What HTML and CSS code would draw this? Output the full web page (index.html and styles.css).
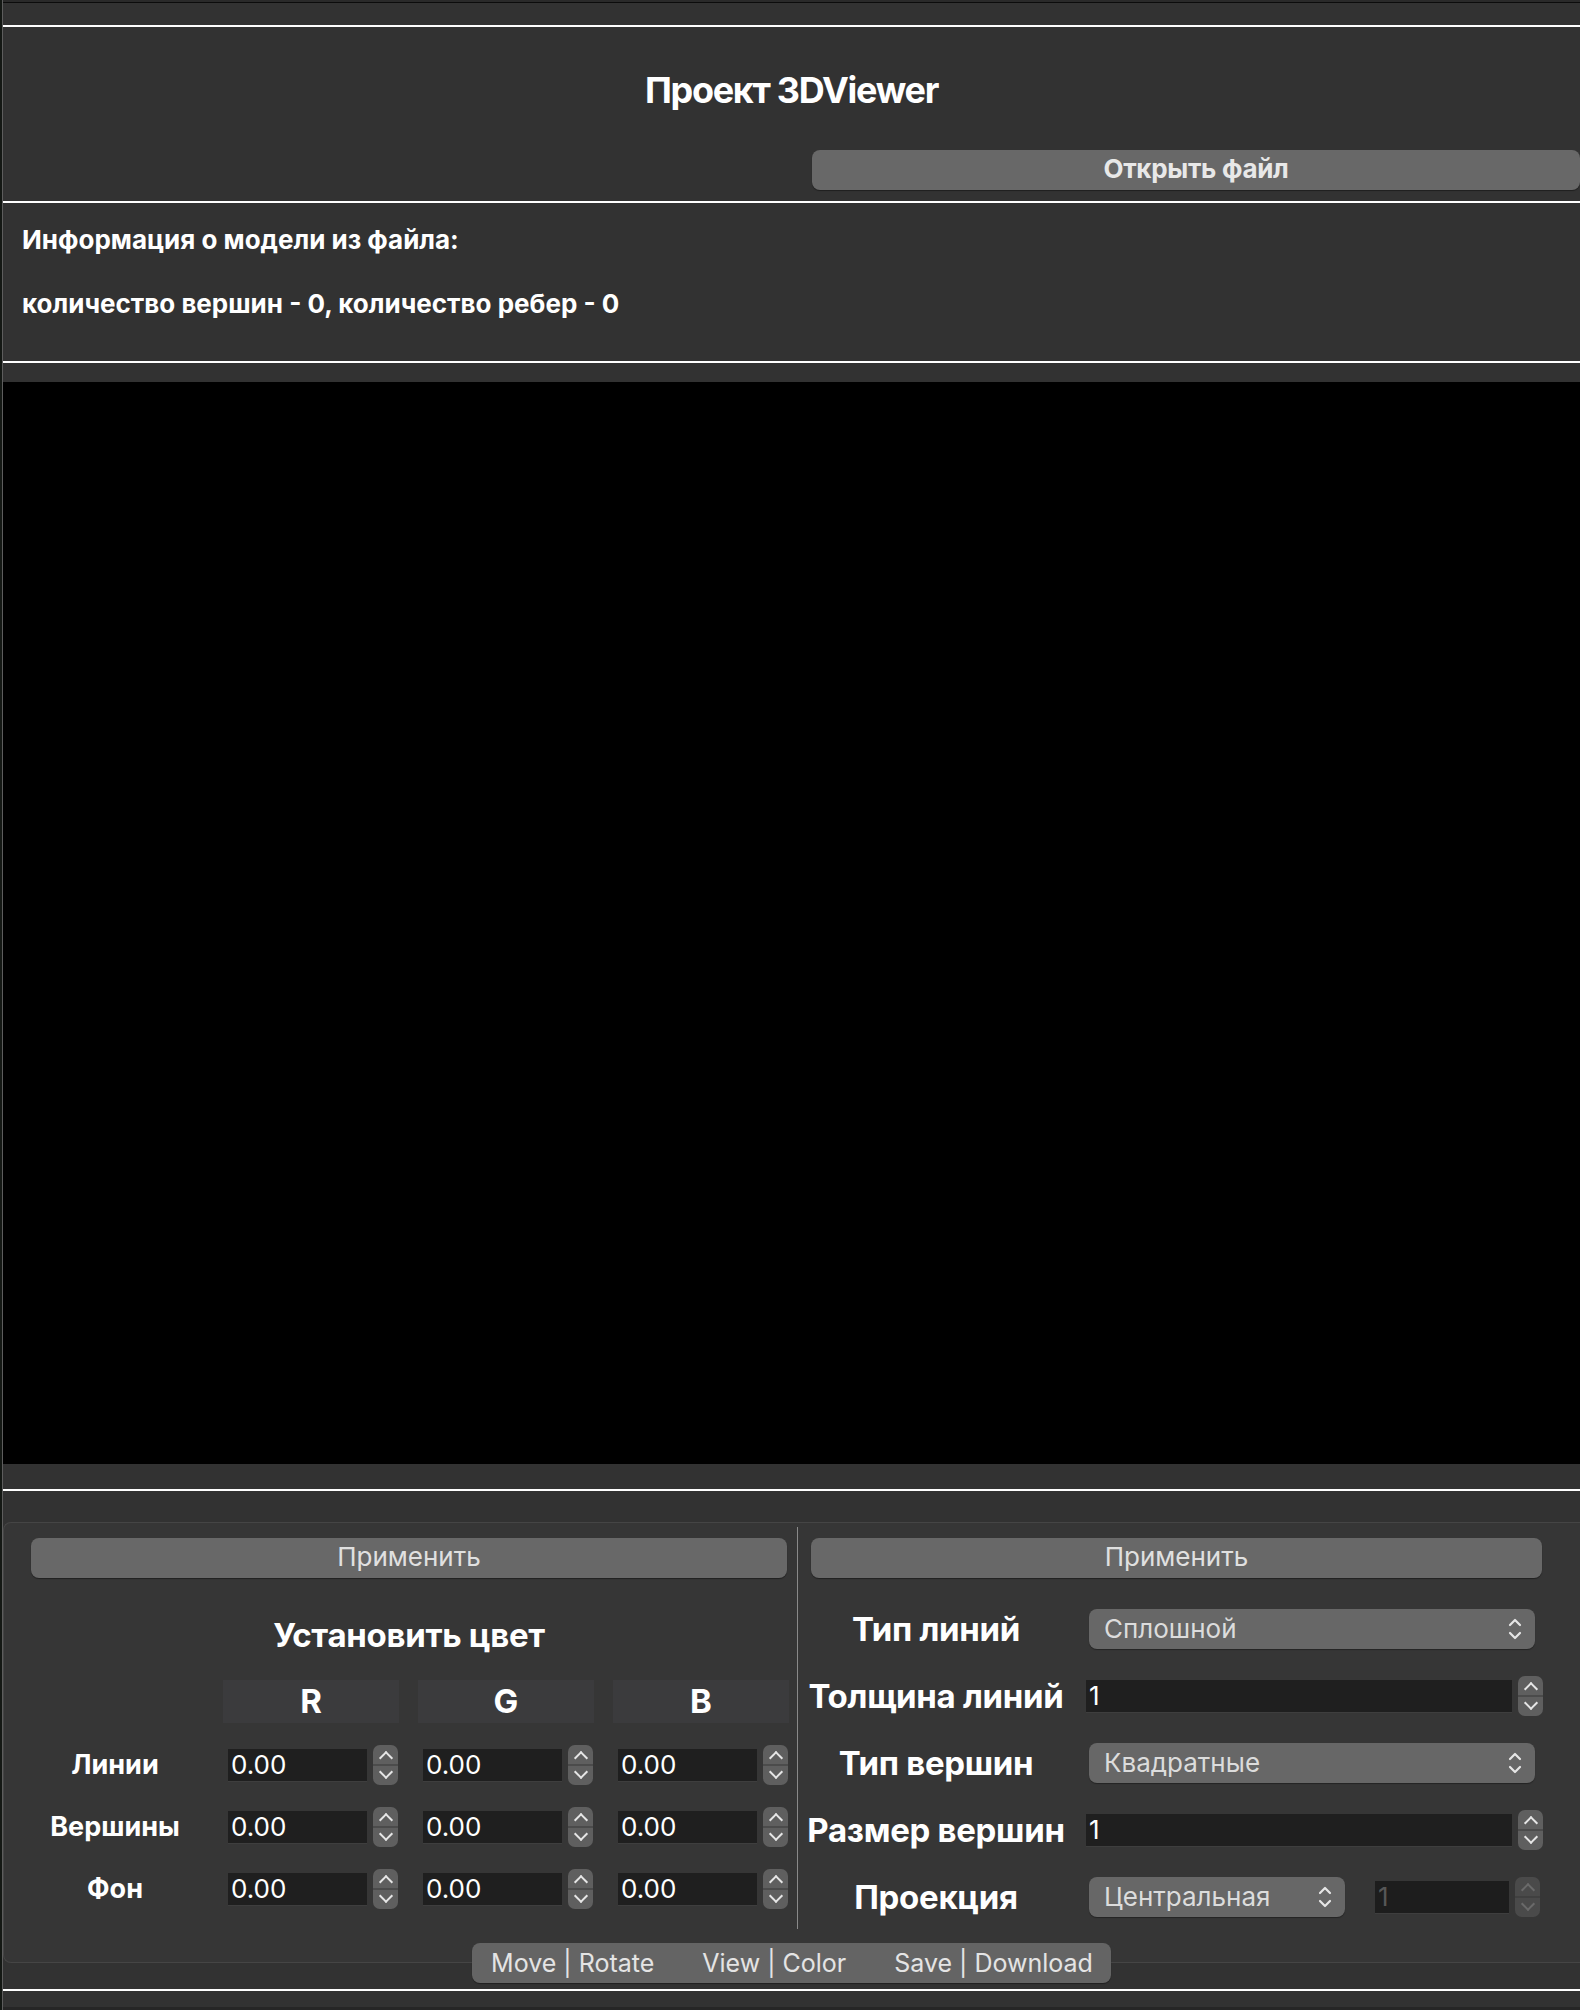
FILE: index.html
```html
<!DOCTYPE html>
<html lang="ru">
<head>
<meta charset="utf-8">
<title>Проект 3DViewer</title>
<link rel="stylesheet" href="styles.css">
</head>
<body>
<div class="window">
  <div class="topline"></div>
  <div class="rule rule-top"></div>
  <header class="head">
    <h1 class="title">Проект 3DViewer</h1>
    <div class="open-row"><button class="btn btn-open">Открыть файл</button></div>
  </header>
  <div class="rule"></div>
  <section class="info">
    <p class="info-line">Информация о модели из файла:</p>
    <p class="info-line">количество вершин - 0, количество ребер - 0</p>
  </section>
  <div class="rule"></div>
  <div class="viewport"></div>
  <div class="rule rule-mid"></div>
  <div class="tabs">
    <div class="panel">
      <div class="pane pane-left">
        <button class="btn btn-apply btn-apply-left">Применить</button>
        <h2 class="color-title">Установить цвет</h2>
        <div class="color-grid">
          <div class="corner"></div>
          <div class="ch">R</div>
          <div class="ch">G</div>
          <div class="ch">B</div>

          <div class="rl">Линии</div>
          <div class="cell"><input class="field" value="0.00"><span class="spin"></span></div>
          <div class="cell"><input class="field" value="0.00"><span class="spin"></span></div>
          <div class="cell"><input class="field" value="0.00"><span class="spin"></span></div>

          <div class="rl">Вершины</div>
          <div class="cell"><input class="field" value="0.00"><span class="spin"></span></div>
          <div class="cell"><input class="field" value="0.00"><span class="spin"></span></div>
          <div class="cell"><input class="field" value="0.00"><span class="spin"></span></div>

          <div class="rl">Фон</div>
          <div class="cell"><input class="field" value="0.00"><span class="spin"></span></div>
          <div class="cell"><input class="field" value="0.00"><span class="spin"></span></div>
          <div class="cell"><input class="field" value="0.00"><span class="spin"></span></div>
        </div>
      </div>
      <div class="sep"></div>
      <div class="pane pane-right">
        <button class="btn btn-apply btn-apply-right">Применить</button>
        <div class="form-grid">
          <div class="fl">Тип линий</div>
          <div class="combo combo-wide"><span>Сплошной</span>
            <svg class="updown" viewBox="0 0 14 24" width="14" height="24"><polyline points="2,8 7,3 12,8"/><polyline points="2,16 7,21 12,16"/></svg>
          </div>

          <div class="fl">Толщина линий</div>
          <div class="spinbox"><input class="field field-wide" value="1"><span class="spin"></span></div>

          <div class="fl">Тип вершин</div>
          <div class="combo combo-wide"><span>Квадратные</span>
            <svg class="updown" viewBox="0 0 14 24" width="14" height="24"><polyline points="2,8 7,3 12,8"/><polyline points="2,16 7,21 12,16"/></svg>
          </div>

          <div class="fl">Размер вершин</div>
          <div class="spinbox"><input class="field field-wide" value="1"><span class="spin"></span></div>

          <div class="fl">Проекция</div>
          <div class="proj-row">
            <div class="combo combo-narrow"><span>Центральная</span>
              <svg class="updown" viewBox="0 0 14 24" width="14" height="24"><polyline points="2,8 7,3 12,8"/><polyline points="2,16 7,21 12,16"/></svg>
            </div>
            <div class="spinbox disabled"><input class="field field-small" value="1" disabled><span class="spin"></span></div>
          </div>
        </div>
      </div>
    </div>
    <nav class="tabbar">
      <span class="tab tab-1">Move | Rotate</span>
      <span class="tab tab-2">View | Color</span>
      <span class="tab tab-3">Save | Download</span>
    </nav>
  </div>
  <div class="rule rule-bottom"></div>
  <div class="bottomline"></div>
</div>
</body>
</html>
```

FILE: styles.css
```css
* { box-sizing: border-box; }
html, body { margin: 0; padding: 0; }
body {
  width: 1580px;
  height: 2010px;
  overflow: hidden;
  background: #141814;
  font-family: Inter, "Noto Sans", "Liberation Sans", sans-serif;
  color: #ffffff;
}
.window {
  margin-left: 2px;
  height: 2010px;
  border-left: 1px solid #5d5d5d;
  background: #323232;
  display: flex;
  flex-direction: column;
}
.topline {
  flex: none;
  height: 3px;
  background: #2a2a2a;
  border-bottom: 1px solid #0c0c0c;
}
.rule { flex: none; height: 2px; background: #ffffff; }
.rule-top { margin-top: 22px; }
.head { flex: none; height: 174px; padding-top: 41px; }
.title {
  margin: 0;
  text-align: center;
  font-size: 36px;
  line-height: 44px;
  font-weight: 700;
  letter-spacing: -1.3px;
}
.open-row { display: flex; justify-content: flex-end; margin-top: 38px; }
.btn {
  font-family: inherit;
  border: none;
  background: #686868;
  color: #e0e0e0;
  border-radius: 8px;
  height: 40px;
  padding: 0 0 3px;
  box-shadow: 0 1px 1px rgba(0, 0, 0, 0.4);
}
.btn-open { width: 768px; font-size: 26px; font-weight: 700; color: #e8e8e8; letter-spacing: -0.3px; }
.info { flex: none; height: 158px; padding: 21px 0 0 19px; }
.info-line {
  margin: 0 0 32px;
  font-size: 26px;
  line-height: 32px;
  font-weight: 700;
}
.viewport { flex: none; margin-top: 19px; height: 1082px; background: #000000; }
.rule-mid { margin-top: 25px; }
.tabs { flex: none; margin-top: 31px; display: flex; flex-direction: column; }
.panel {
  height: 441px;
  border: 1px solid #454545;
  border-right: none;
  border-radius: 8px 0 0 8px;
  background: #363636;
  display: flex;
}
.pane { padding-top: 15px; }
.pane-left { width: 793px; flex: none; }
.btn-apply { display: block; font-size: 26px; }
.btn-apply-left { margin-left: 27px; width: 756px; }
.color-title {
  margin: 37px 0 0 27px;
  width: 756px;
  text-align: center;
  font-size: 33px;
  line-height: 40px;
  font-weight: 700;
  letter-spacing: -0.3px;
}
.color-grid {
  margin-top: 25px;
  display: grid;
  grid-template-columns: 200px 176px 176px 176px;
  grid-template-rows: 43px 40px 40px 40px;
  column-gap: 19px;
  row-gap: 22px;
}
.ch {
  background: #3b3b3d;
  text-align: center;
  font-size: 33px;
  font-weight: 700;
  line-height: 43px;
}
.rl {
  padding-left: 22px;
  text-align: center;
  font-size: 27px;
  font-weight: 700;
  line-height: 40px;
}
.cell { display: flex; align-items: center; gap: 6px; padding-left: 5px; }
.field {
  font-family: inherit;
  height: 33px;
  border: none;
  border-bottom: 1px solid #3e3e3e;
  background: #1f1f1f;
  color: #ffffff;
  font-size: 26px;
  padding: 0 0 0 3px;
  margin: 0;
  outline: none;
}
.cell .field { width: 139px; }
.spin {
  position: relative;
  flex: none;
  width: 25px;
  height: 40px;
  border-radius: 7px;
  background: linear-gradient(#5f5f5f 0, #5f5f5f 19px, #4b4b4b 19px, #4b4b4b 21px, #5f5f5f 21px);
}
.spin::before,
.spin::after {
  content: "";
  position: absolute;
  left: 8px;
  width: 8px;
  height: 8px;
  border-top: 2.5px solid #e6e6e6;
  border-left: 2.5px solid #e6e6e6;
}
.spin::before { top: 8px; transform: rotate(45deg); }
.spin::after { bottom: 8px; transform: rotate(-135deg); }
.sep { flex: none; width: 1px; height: 402px; margin-top: 4px; background: #8a8a8a; }
.pane-right { flex: 1; }
.btn-apply-right { margin-left: 13px; width: 731px; }
.form-grid {
  margin-top: 31px;
  padding-left: 8px;
  display: grid;
  grid-template-columns: 260px auto;
  grid-auto-rows: 40px;
  column-gap: 20px;
  row-gap: 27px;
}
.fl {
  text-align: center;
  font-size: 33px;
  font-weight: 700;
  line-height: 40px;
  letter-spacing: -0.3px;
  white-space: nowrap;
}
.combo {
  height: 40px;
  margin-left: 3px;
  border-radius: 8px;
  background: #676767;
  color: #dcdcdc;
  font-size: 26px;
  line-height: 40px;
  padding-left: 15px;
  display: flex;
  align-items: center;
  justify-content: space-between;
  padding-right: 13px;
  box-shadow: 0 1px 1px rgba(0, 0, 0, 0.35);
}
.combo-wide { width: 446px; }
.combo-narrow { width: 256px; }
.updown { fill: none; stroke: #e6e6e6; stroke-width: 2.2; stroke-linecap: round; stroke-linejoin: round; }
.spinbox { display: flex; align-items: center; gap: 6px; }
.field-wide { width: 426px; }
.field-small { width: 134px; }
.proj-row { display: flex; align-items: center; gap: 30px; }
.disabled .field { color: #575757; background: #1d1d1d; }
.disabled .spin { background: linear-gradient(#4a4a4a 0, #4a4a4a 19px, #404040 19px, #404040 21px, #4a4a4a 21px); }
.disabled .spin::before,
.disabled .spin::after { border-color: #6a6a6a; }
.tabbar {
  position: relative;
  align-self: center;
  margin-top: -20px;
  height: 40px;
  display: flex;
  align-items: center;
  background: #646464;
  border-radius: 8px;
  font-size: 25px;
  color: #e4e4e4;
  box-shadow: 0 1px 1px rgba(0, 0, 0, 0.35);
}
.tab { padding: 0 24px; white-space: nowrap; }
.tab-1 { padding-left: 19px; }
.tab-3 { padding-right: 18px; }
.rule-bottom { margin-top: 6px; }
.bottomline { flex: none; margin-top: 16px; height: 3px; background: #262626; }
```
